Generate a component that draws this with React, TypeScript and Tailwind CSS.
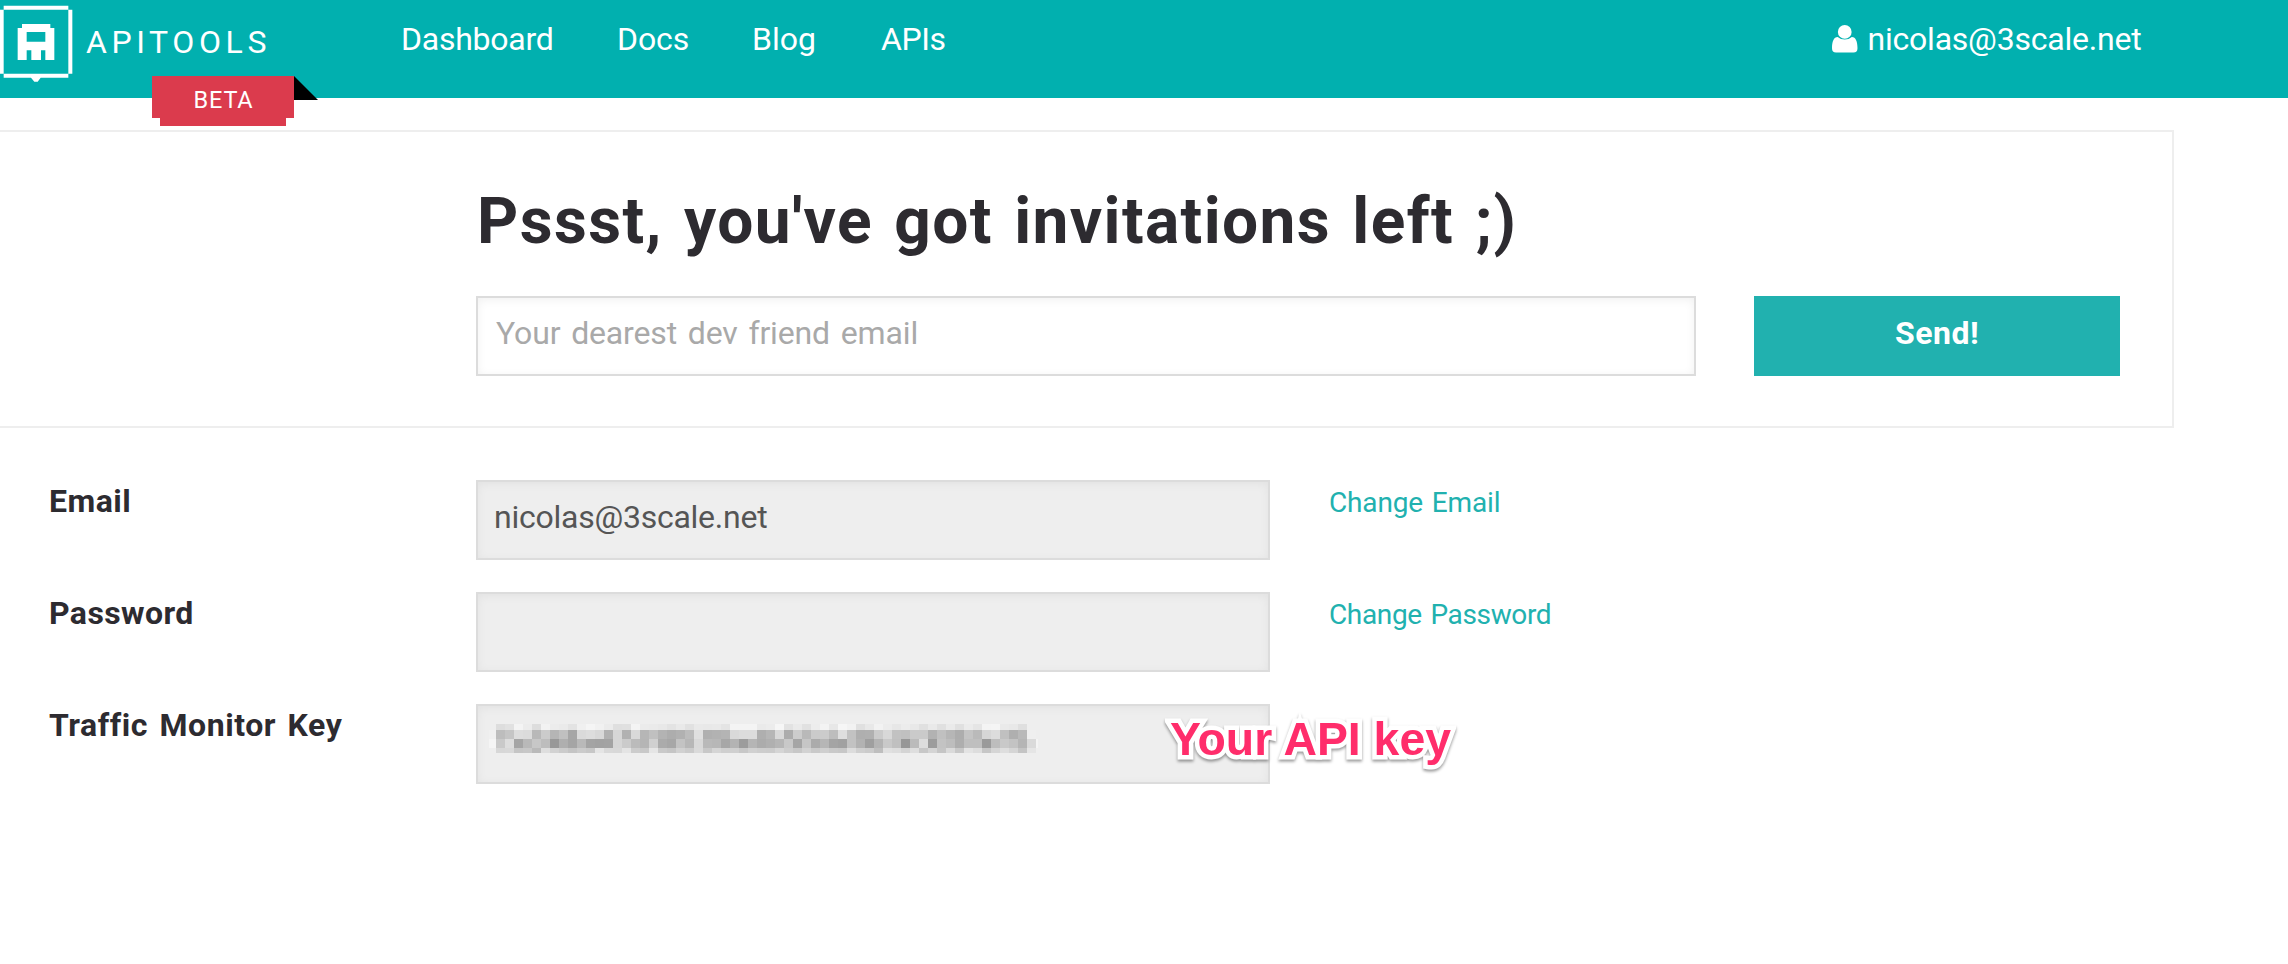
import type { ReactNode } from "react";

const maskRows = [
  { y: 0, h: 6, start: 0, cells: "dd e1 f4 ec dd f2 ec ea e3 f0 f5 f1 eb df e0 f4 eb ea e8 e3 e9 e1 e9 e8 e9 e4 f4 f4 f4 ea ec f6 e2 ea e1 ed f3 e7 f6 f2 e0 e8 f2 ec e7 ec e8 e0 e9 e0 ea e0 eb e5 f4 f5 ea e8 df" },
  { y: 6, h: 9, start: -1, cells: "f0 bd c5 dd db b8 cb b5 c0 a6 da dd d8 b1 d6 b1 d9 b6 c0 b3 ad b1 bc e0 b0 b2 b4 d9 dc dc af b6 d9 ac cc b9 cb cc bd de c2 af b0 cb d8 c2 c0 ca ca b2 c0 b6 ad c4 ba d6 dc c0 af b9 ef" },
  { y: 15, h: 9, start: -1, cells: "f5 c9 dd a5 b9 c7 bd 98 af a5 b9 a4 a2 a3 d6 cb bb b5 d0 ab a7 c3 b7 d9 b9 b7 a7 b3 9c b5 ac b0 b6 c8 a5 c6 ab b6 a4 a1 c2 b2 9f b4 c9 c0 97 bb dd 9c c3 bd ae bf bf 9a bd c9 c3 b5 da f4" },
  { y: 24, h: 5, start: 0, cells: "d7 d8 c5 c7 b9 de d2 cb c4 cb c7 e5 d9 d8 e4 cc c8 e5 c9 c5 d1 cb da c8 d5 cf cf c7 d0 cd cc d5 cd c7 d2 c9 cf c9 c7 dc cf cb be e0 dd d4 de c7 d4 c5 da c8 e3 dd c6 d5 de d5 c4 e5" },
];

function MaskedKey() {
  return (
    <svg className="mt-[18px] ml-[11px] h-[29px] w-[549px]" viewBox="-7 0 549 29" shapeRendering="crispEdges">
      {maskRows.map((row) =>
        row.cells.split(" ").map((shade, i) => {
          const col = i + row.start;
          return <rect key={`${row.y}-${col}`} x={col * 9} y={row.y} width={9} height={row.h} fill={`#${shade}${shade}${shade}`} />;
        })
      )}
    </svg>
  );
}

function LogoMark() {
  return (
    <svg className="mt-[5px] h-[78px] w-[73px] shrink-0" viewBox="0 15 219 234" fill="#fff">
      <path d="M11 17H205V29H11ZM0 29H11V221H0ZM205 29H217V221H205ZM11 221H205V233H122L113 245H103L93 233H11Z" />
      <path fillRule="evenodd" d="M66 72H151V84H163V180H136V151H123V180H94V151H80V180H53V84H66ZM80 96V125H136V96Z" />
    </svg>
  );
}

function UserIcon() {
  return (
    <svg className="mt-[25px] h-[27.5px] w-[25.5px]" viewBox="0 0 76 82" fill="#fff">
      <circle cx="38" cy="20.5" r="20.5" />
      <path d="M17 36C23 41 30 43.5 38 43.5S53 41 59 36C71 36 76 50 76 69Q76 82 64 82H12Q0 82 0 69C0 50 5 36 17 36Z" />
    </svg>
  );
}

function Row({ label, labelClass, link, linkClass, children }: { label: string; labelClass: string; link?: string; linkClass?: string; children?: ReactNode }) {
  return (
    <div className="flex h-20">
      <label className={`w-[427px] shrink-0 text-[32px] leading-[42px] font-bold whitespace-nowrap ${labelClass}`}>{label}</label>
      <div className="flex h-20 w-[794px] shrink-0 items-start border-2 border-[#dcdcdc] bg-[#eee] shadow-[inset_0_2px_10px_rgba(0,0,0,0.05)]">{children}</div>
      {link && <a className={`ml-[59px] text-[28px] leading-[46px] whitespace-nowrap text-[#21b1af] ${linkClass}`}>{link}</a>}
    </div>
  );
}

export default function App() {
  return (
    <div className="h-[964px] w-[2288px] overflow-hidden bg-white font-['Roboto',sans-serif] text-[#2d2b30]">
      <header className="relative flex h-[98px] items-start bg-[#01b0af] text-[32px] leading-[79px] text-white">
        <LogoMark />
        <span className="ml-[13px] w-[315px] text-[32px] leading-[84px] tracking-[4.6px]">APITOOLS</span>
        <nav className="flex whitespace-nowrap">
          <a className="w-[216px] tracking-[-0.25px]">Dashboard</a>
          <a className="w-[135px] tracking-[-0.1px]">Docs</a>
          <a className="w-[129px]">Blog</a>
          <a className="tracking-[-0.4px]">APIs</a>
        </nav>
        <div className="ml-auto flex w-[456px] gap-[10px]">
          <UserIcon />
          <span className="tracking-[-0.22px]">nicolas@3scale.net</span>
        </div>
        <div className="absolute top-[76px] left-[152px] flex">
          <div className="flex flex-col items-center">
            <div className="h-[42px] w-[142px] bg-[#db3b4d] pl-px text-center text-[23.5px] leading-[48px] tracking-[0.8px]">BETA</div>
            <div className="h-2 w-[126px] bg-[#db3b4d]" />
          </div>
          <svg className="h-6 w-6" viewBox="0 0 24 24">
            <path d="M0 0L24 24H0Z" fill="#000" />
          </svg>
        </div>
      </header>

      <main className="pt-8">
        <section className="h-[298px] w-[2174px] border-2 border-l-0 border-[#eee] pt-[45px] pl-[476px]">
          <h1 className="pl-px text-[64px] leading-[90px] font-bold tracking-[1.4px] whitespace-nowrap [word-spacing:4px]">Pssst, you've got invitations left ;)</h1>
          <div className="mt-[29px] flex gap-[58px]">
            <div className="h-20 w-[1220px] border-2 border-[#dcdcdc] px-[18px] text-[32px] leading-[71px] tracking-[-0.15px] text-[#a9a9a9] shadow-[inset_0_2px_10px_rgba(0,0,0,0.06)] [word-spacing:3px]">
              Your dearest dev friend email
            </div>
            <button className="h-20 w-[366px] bg-[#21b1af] pb-[6px] text-[32px] font-bold tracking-[0.5px] text-white">Send!</button>
          </div>
        </section>

        <section className="flex flex-col gap-8 pt-[52px] pl-[49px]">
          <Row label="Email" labelClass="tracking-[0.5px]" link="Change Email" linkClass="tracking-[-0.15px] [word-spacing:2px]">
            <span className="pl-[16px] text-[32px] leading-[71px] tracking-[-0.25px] text-[#555]">nicolas@3scale.net</span>
          </Row>
          <Row label="Password" labelClass="tracking-[0.4px]" link="Change Password" linkClass="tracking-[-0.35px] [word-spacing:2px]" />
          <div className="relative">
            <Row label="Traffic Monitor Key" labelClass="tracking-[0.55px] [word-spacing:3px]">
              <MaskedKey />
            </Row>
            <span className="absolute top-[8px] left-[1121px] font-['Liberation_Sans',Arial,sans-serif] text-[46.4px] leading-[54px] font-bold whitespace-nowrap text-[#ff2d6b] drop-shadow-[0_2px_1.5px_rgba(0,0,0,0.4)] [-webkit-text-stroke:9px_white] [paint-order:stroke_fill] [stroke-linejoin:round]">
              Your API key
            </span>
          </div>
        </section>
      </main>
    </div>
  );
}
